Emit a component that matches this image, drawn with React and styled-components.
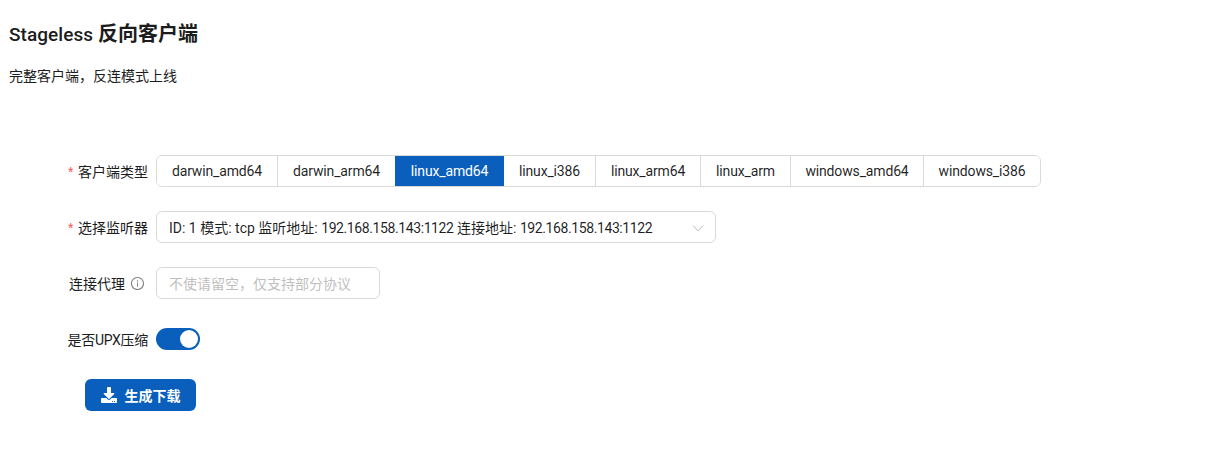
import React from 'react';
import styled, { createGlobalStyle } from 'styled-components';
import { FaDownload } from 'react-icons/fa';
import { AiOutlineInfoCircle } from 'react-icons/ai';

const Global = createGlobalStyle`
  html, body { margin: 0; padding: 0; background: #fff; }
  body { font-family: Roboto, "Noto Sans CJK SC", sans-serif; font-size: 14px; color: rgba(0,0,0,.88); }
`;
const Page = styled.div`
  width: 1224px; height: 470px; box-sizing: border-box; padding: 20px 9px 0; overflow: hidden;
`;
const Title = styled.h1`
  margin: 0; font-size: 20px; line-height: 28px; font-weight: 600; color: #1c1c1c;
`;
const TitleLatin = styled.span`
  font-size: 19px; font-weight: 500; letter-spacing: 0.05px;
`;
const Desc = styled.p`
  margin: 16px 0 0; font-size: 14px; line-height: 22px; color: #1c1c1c;
`;
const Form = styled.div`
  margin-top: 68px; display: flex; flex-direction: column;
`;
const Row = styled.div`
  display: flex; align-items: center; height: 32px; margin-bottom: 24px;
`;
const LabelCell = styled.div`
  width: 139px; margin-right: 8px; display: flex; justify-content: flex-end; align-items: center; white-space: nowrap; font-size: 14px; color: #1c1c1c;
  letter-spacing: ${p => p.$tight ? '-0.3px' : '0'};
`;
const Star = styled.span`
  color: #ff4d4f; margin-right: 3px; margin-top: 5px; font-size: 14px; font-family: "Liberation Mono", monospace;
`;
const Segments = styled.div`
  display: flex; height: 32px; box-sizing: border-box; border: 1px solid #d9d9d9; border-radius: 6px; overflow: hidden;
`;
const Segment = styled.div`
  display: flex; align-items: center; justify-content: center; box-sizing: border-box;
  width: ${p => p.$w}px; font-size: 14px; letter-spacing: -0.15px;
  border-left: ${p => (p.$first || p.$active || p.$afterActive) ? 'none' : '1px solid #d9d9d9'};
  background: ${p => p.$active ? '#0a5fbd' : '#fff'};
  color: ${p => p.$active ? '#fff' : 'rgba(0,0,0,.88)'};
`;
const SelectBox = styled.div`
  width: 560px; height: 32px; box-sizing: border-box; border: 1px solid #d9d9d9; border-radius: 6px;
  display: flex; align-items: center; justify-content: space-between; padding: 0 11px 0 12px; font-size: 14px; white-space: nowrap;
`;
const Address = styled.span`
  letter-spacing: -0.4px;
`;
const Chevron = styled.svg`
  width: 12px; height: 12px; color: #bfbfbf; margin-top: 1px;
`;
const Input = styled.div`
  width: 224px; height: 32px; box-sizing: border-box; border: 1px solid #d9d9d9; border-radius: 6px;
  display: flex; align-items: center; padding: 0 12px; font-size: 14px; color: #bfbfbf;
`;
const InfoIcon = styled(AiOutlineInfoCircle)`
  width: 15px; height: 15px; margin-left: 5px; margin-right: 3px; margin-top: 1px; color: #7f7f7f;
`;
const Switch = styled.div`
  width: 44px; height: 22px; border-radius: 11px; background: #0a5fbd; position: relative;
`;
const Knob = styled.div`
  position: absolute; top: 2px; right: 2px; width: 18px; height: 18px; border-radius: 50%; background: #fff;
`;
const ButtonRow = styled.div`
  padding-left: 76px;
`;
const Button = styled.button`
  width: 111px; height: 32px; border: 0; border-radius: 6px; background: #0a5fbd; color: #fff;
  display: flex; align-items: center; justify-content: center; gap: 8px; padding: 0;
  font-family: inherit; font-size: 14px; font-weight: 600;
`;
const DownloadIcon = styled(FaDownload)`
  width: 16px; height: 16px;
`;

const items = [
  ['darwin_amd64', 120], ['darwin_arm64', 118], ['linux_amd64', 109], ['linux_i386', 91],
  ['linux_arm64', 105], ['linux_arm', 90], ['windows_amd64', 133], ['windows_i386', 117],
];

export default function App() {
  return (
    <Page>
      <Global />
      <Title><TitleLatin>Stageless</TitleLatin> 反向客户端</Title>
      <Desc>完整客户端，反连模式上线</Desc>
      <Form>
        <Row>
          <LabelCell><Star>*</Star>客户端类型</LabelCell>
          <Segments>
            {items.map(([t, w], i) => (
              <Segment key={t} $w={w} $first={i === 0} $active={i === 2} $afterActive={i === 3}>{t}</Segment>
            ))}
          </Segments>
        </Row>
        <Row>
          <LabelCell><Star>*</Star>选择监听器</LabelCell>
          <SelectBox>
            <span>ID: 1 模式: tcp 监听地址: <Address>192.168.158.143:1122</Address> 连接地址: <Address>192.168.158.143:1122</Address></span>
            <Chevron viewBox="0 0 12 12" fill="none" stroke="currentColor" strokeWidth="1"><path d="M1 3.5 6 9l5-5.5" /></Chevron>
          </SelectBox>
        </Row>
        <Row>
          <LabelCell>连接代理<InfoIcon /></LabelCell>
          <Input>不使请留空，仅支持部分协议</Input>
        </Row>
        <Row>
          <LabelCell $tight>是否UPX压缩</LabelCell>
          <Switch><Knob /></Switch>
        </Row>
        <ButtonRow>
          <Button>
            <DownloadIcon />
            生成下载
          </Button>
        </ButtonRow>
      </Form>
    </Page>
  );
}
